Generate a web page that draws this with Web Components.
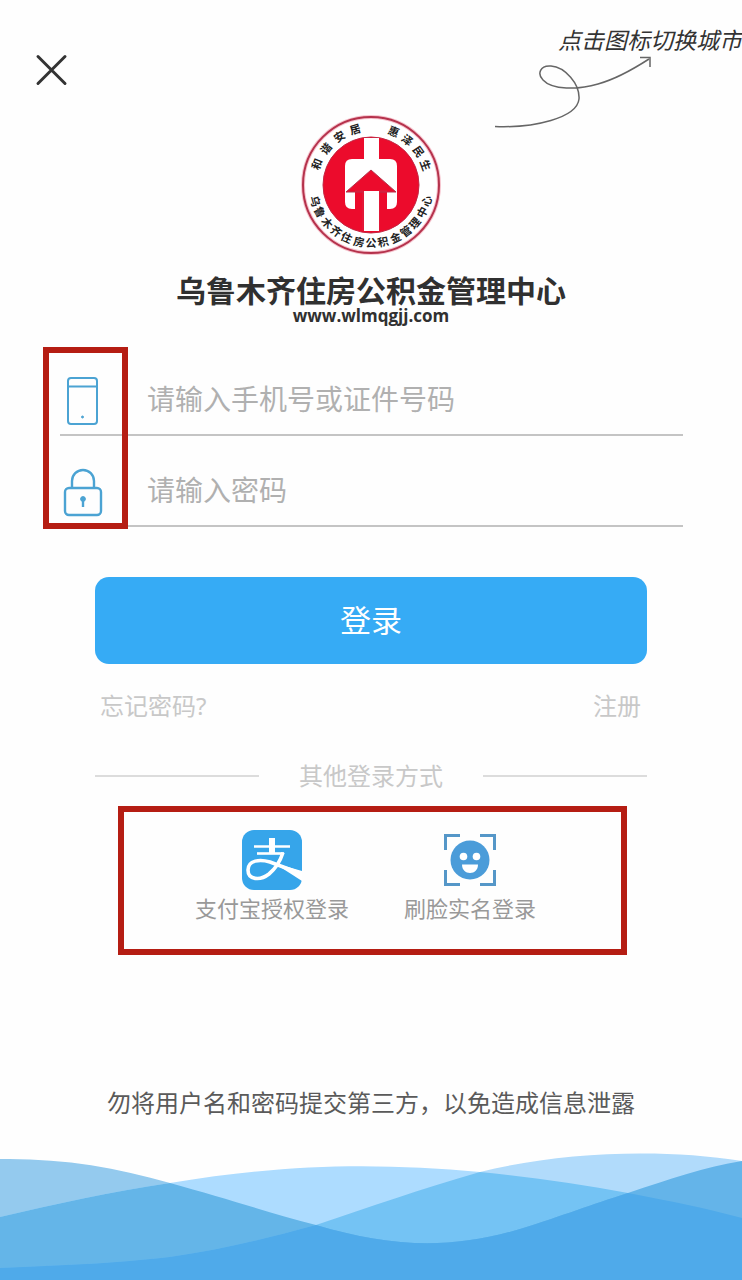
<!DOCTYPE html>
<html lang="zh-CN">
<head>
<meta charset="utf-8">
<meta name="viewport" content="width=device-width, initial-scale=1">
<title>登录</title>
<style>
body {
  margin: 0;
  background: #fefefe;
  font-family: "Noto Sans", "Noto Sans CJK SC", sans-serif;
}
</style>
</head>
<body>
<login-page>
  <city-hint slot="top">点击图标切换城市</city-hint>
  <brand-head slot="brand" url="www.wlmqgjj.com">乌鲁木齐住房公积金管理中心</brand-head>
  <icon-field slot="field" name="account" hint="请输入手机号或证件号码">
    <svg width="34" height="50" viewBox="0 0 34 50" fill="none" stroke="#4ba3d3" stroke-width="2">
      <rect x="2" y="2" width="29" height="46" rx="3"/>
      <path d="M2 10.500H31"/>
      <circle cx="16.500" cy="41" r="1" fill="#4ba3d3" stroke-width="1"/>
    </svg>
  </icon-field>
  <icon-field slot="field" name="password" type="password" hint="请输入密码">
    <svg width="40" height="50" viewBox="0 0 40 50" fill="none" stroke="#4ba3d3" stroke-width="2.400">
      <rect x="2" y="21" width="36" height="27" rx="4"/>
      <path d="M9 21V14a11 11 0 0 1 22 0v7"/>
      <path d="M20 32v8" stroke-width="2.400"/>
      <circle cx="20" cy="32" r="2.400" fill="#4ba3d3" stroke-width="1"/>
    </svg>
  </icon-field>
  <other-login slot="other" label="其他登录方式">
    <login-way name="支付宝授权登录">
      <svg width="60" height="60" viewBox="0 0 60 60">
        <rect width="60" height="60" rx="12" fill="#36a5ea"/>
        <g fill="none" stroke="#fff">
          <path d="M12 16.500H48" stroke-width="2.600"/>
          <path d="M30 8V24" stroke-width="6"/>
          <path d="M15 23.500H42" stroke-width="2.600"/>
          <path d="M41 22.500C38 32 33 39 27 44C18 51 6 50 6 40C6 30 18 29 28 32L60 44" stroke-width="3.600"/>
        </g>
        <path d="M32 33L60 41V51Z" fill="#fff"/>
      </svg>
    </login-way>
    <login-way name="刷脸实名登录">
      <svg width="60" height="60" viewBox="0 0 60 60">
        <g fill="none" stroke="#5597c8" stroke-width="3">
          <path d="M5.500 20V5.500H20M40 5.500H54.500V20M54.500 40V54.500H40M20 54.500H5.500V40"/>
        </g>
        <circle cx="30" cy="30" r="19.500" fill="#4b9cd9"/>
        <circle cx="23.500" cy="26.500" r="3.800" fill="#fff"/>
        <circle cx="36.500" cy="26.500" r="3.800" fill="#fff"/>
        <path d="M22 34.500H38C38 40 34.500 43 30 43S22 40 22 34.500Z" fill="#fff"/>
      </svg>
    </login-way>
  </other-login>
  <span slot="notice">勿将用户名和密码提交第三方，以免造成信息泄露</span>
  <wave-footer slot="footer"></wave-footer>
</login-page>

<script>
const define = (name, html, setup) => {
  const template = document.createElement('template')
  template.innerHTML = html

  customElements.define(name, class extends HTMLElement {
    constructor() {
      super()
      this.attachShadow({ mode: 'open' })
      this.shadowRoot.appendChild(template.content.cloneNode(true))
      if (setup) setup(this, this.shadowRoot)
    }
  })
}

define('city-hint', `
<style>
:host {
  display: flex;
  flex-direction: column;
  width: 248px;
  color: #333;
  font-size: 23px;
  line-height: 32px;
  font-style: italic;
  white-space: nowrap;
}
div { align-self: flex-end; }
svg { display: block; }
</style>
<div><slot></slot></div>
<svg width="162" height="76" viewBox="0 0 162 76" fill="none" stroke="#666" stroke-width="1.500">
  <path d="M1 70.500C40 72 83 62 85 43C86 28 71 11 57 10C46 9 43 18 49 24C58 34 84 34 104 28C122 23 138 14 155 3"/>
  <path d="M146 1.500H156V11"/>
</svg>
`)

define('brand-head', `
<style>
:host {
  display: flex;
  flex-direction: column;
  align-items: center;
  color: #303030;
  font-weight: 700;
}
svg { display: block; width: 160px; height: 160px; margin: -12px 0 -11px; }
h1 {
  margin: 20px 0 0;
  font-size: 30px;
  line-height: 34px;
}
p {
  margin: 0 0 2px;
  font-family: "Open Sans", sans-serif;
  font-size: 17px;
  line-height: 16px;
}
svg text {
  font-family: "Noto Sans CJK SC", sans-serif;
  font-size: 11px;
  fill: #222;
}
</style>
<svg viewBox="-80 -80 160 160">
  <circle r="68" fill="#fff" stroke="#f6c4ce" stroke-width="4"/>
  <circle r="68" fill="none" stroke="#b5324c" stroke-width="2"/>
  <circle r="48" fill="#ec0b2c" stroke="#c32643"/>
  <path d="M-7 -47H8V-26H19Q26 -26 26 -19V17Q26 24 19 24H16V6H8V46H-7V6H-16V24H-19Q-26 24 -26 17V-19Q-26 -26 -19 -26H-7Z" fill="#fff"/>
  <path d="M0 -15L25 7H-25Z" fill="#ec0b2c" stroke="#b5324c"/>
  <path d="M-16 6H-8V46M16 6H8V46" fill="none" stroke="#d92543"/>
  <path d="M-7 6H8V46H-7Z" fill="#fff"/>
  <text data-angles="-69 -51 -33 -16">和谐安居</text>
  <text data-angles="23 39 55 70">惠泽民生</text>
  <text data-angles="254 242 229 217 205 192 180 168 155 143 131 118 106" data-bottom>乌鲁木齐住房公积金管理中心</text>
</svg>
<h1><slot></slot></h1>
<p></p>
`, (el, root) => {
  root.querySelector('p').textContent = el.getAttribute('url')

  // angles are clockwise from the top of the seal, one for each character
  const size = 11, radius = 58
  root.querySelectorAll('text').forEach(text => {
    const xs = [], ys = [], turns = []
    text.dataset.angles.split(' ').map(Number).forEach(deg => {
      const a = deg * Math.PI / 180
      const turn = 'bottom' in text.dataset ? deg - 180 : deg
      const t = turn * Math.PI / 180
      const dx = -size / 2, dy = size * .38
      xs.push((radius * Math.sin(a) + dx * Math.cos(t) - dy * Math.sin(t)).toFixed(1))
      ys.push((-radius * Math.cos(a) + dx * Math.sin(t) + dy * Math.cos(t)).toFixed(1))
      turns.push(turn)
    })
    text.setAttribute('x', xs.join(' '))
    text.setAttribute('y', ys.join(' '))
    text.setAttribute('rotate', turns.join(' '))
  })
})

define('icon-field', `
<style>
:host {
  display: flex;
  align-items: center;
  padding-top: 19px;
  border-bottom: 2px solid #c4c4c4;
}
label {
  display: flex;
  justify-content: center;
  width: 46px;
  padding-top: 3px;
}
input {
  flex: 1;
  min-width: 0;
  height: 70px;
  margin-left: 41px;
  padding: 0;
  border: 0;
  outline: 0;
  background: none;
  color: #333;
  font: inherit;
  font-size: 28px;
}
input::placeholder { color: #b0b0b0; opacity: 1; }
</style>
<label for="box"><slot></slot></label>
<input id="box">
`, (el, root) => {
  const input = root.querySelector('input')
  input.type = el.getAttribute('type') || 'text'
  input.name = el.getAttribute('name')
  input.placeholder = el.getAttribute('hint')
  input.setAttribute('aria-label', input.placeholder)
})

define('login-way', `
<style>
:host { display: block; }
button {
  display: flex;
  flex-direction: column;
  align-items: center;
  gap: 4px;
  padding: 0;
  border: 0;
  background: none;
  color: #999;
  font: inherit;
  font-size: 22px;
  line-height: 28px;
}
</style>
<button type="button"><slot></slot><span></span></button>
`, (el, root) => {
  root.querySelector('span').textContent = el.getAttribute('name')
})

define('other-login', `
<style>
:host { display: block; }
.title {
  display: flex;
  align-items: center;
  gap: 40px;
  color: #c8c8c8;
  font-size: 24px;
  line-height: 36px;
}
.title::before,
.title::after {
  content: "";
  flex: 1;
  height: 2px;
  background: #dcdcdc;
}
.ways {
  display: flex;
  justify-content: center;
  gap: 55px;
  margin: 12px 20px 0 23px;
  padding: 18px 14px 27px 0;
  border: 6px solid #b51d13;
}
</style>
<div class="title"><span></span></div>
<div class="ways"><slot></slot></div>
`, (el, root) => {
  root.querySelector('span').textContent = el.getAttribute('label')
})

define('wave-footer', `
<style>
:host { display: block; }
svg { display: block; width: 100%; height: 130px; }
</style>
<svg viewBox="0 1150 742 130" preserveAspectRatio="none">
  <defs>
    <path id="a" d="M0 1159C60 1158 115 1167 170 1183C225 1198 270 1213 316 1225C390 1247 450 1250 520 1229C565 1215 590 1205 628 1193C670 1179 705 1167 742 1161V1280H0Z"/>
    <path id="b" d="M0 1217C55 1204 110 1192 170 1183C290 1163 380 1163 480 1172C530 1177 580 1184 628 1193C670 1201 705 1208 742 1218V1280H0Z"/>
    <path id="c" d="M0 1268C65 1265 110 1264 170 1257C220 1250 265 1239 316 1225C370 1207 420 1189 480 1172C560 1152 660 1148 742 1161V1280H0Z"/>
    <clipPath id="in-a"><use href="#a"/></clipPath>
    <clipPath id="in-b"><use href="#b"/></clipPath>
  </defs>
  <use href="#a" fill="#94caee"/>
  <use href="#b" fill="#addcff"/>
  <use href="#c" fill="#b1dbfb"/>
  <use href="#b" fill="#64b5e8" clip-path="url(#in-a)"/>
  <use href="#c" fill="#74c3f4" clip-path="url(#in-b)"/>
  <use href="#c" fill="#64b4e9" clip-path="url(#in-a)"/>
  <g clip-path="url(#in-a)"><use href="#c" fill="#4faaea" clip-path="url(#in-b)"/></g>
</svg>
`)

define('login-page', `
<style>
:host {
  display: flex;
  flex-direction: column;
  min-height: 100vh;
  overflow: hidden;
}
header {
  display: flex;
  justify-content: space-between;
  align-items: flex-start;
  height: 117px;
  padding: 24px 0 0 32px;
  box-sizing: border-box;
}
.close {
  display: flex;
  margin-top: 26px;
  padding: 0;
  border: 0;
  background: none;
}
.fields {
  position: relative;
  margin: 19px 59px 0 60px;
}
/* red frame drawn over the two field icons */
.frame {
  position: absolute;
  top: 2px;
  left: -17px;
  width: 85px;
  height: 182px;
  box-sizing: border-box;
  border: 6px solid #b51d13;
  pointer-events: none;
}
.actions {
  display: flex;
  flex-direction: column;
  margin: 50px 95px 0;
}
.submit {
  height: 87px;
  padding: 0 0 4px;
  border: 0;
  border-radius: 14px;
  background: #36abf5;
  color: #fff;
  font: inherit;
  font-size: 31px;
}
nav {
  display: flex;
  justify-content: space-between;
  margin: 24px 6px 34px 5px;
  font-size: 24px;
  line-height: 36px;
}
a { color: #c8c8c8; text-decoration: none; }
.notice {
  margin: 132px 0 30px;
  color: #5a5a5a;
  font-size: 24px;
  line-height: 32px;
  text-align: center;
}
footer { margin-top: auto; }
</style>
<header>
  <button class="close" type="button" aria-label="关闭">
    <svg width="40" height="40" viewBox="0 0 40 40" stroke="#333" stroke-width="3" stroke-linecap="round">
      <path d="M6 6.500L33 33.500M33 6.500L6 33.500"/>
    </svg>
  </button>
  <slot name="top"></slot>
</header>
<slot name="brand"></slot>
<form>
  <div class="fields">
    <slot name="field"></slot>
    <div class="frame"></div>
  </div>
  <div class="actions">
    <button class="submit" type="button">登录</button>
    <nav><a href="#forgot">忘记密码?</a><a href="#register">注册</a></nav>
    <slot name="other"></slot>
  </div>
</form>
<div class="notice"><slot name="notice"></slot></div>
<footer><slot name="footer"></slot></footer>
`)
</script>
</body>
</html>
